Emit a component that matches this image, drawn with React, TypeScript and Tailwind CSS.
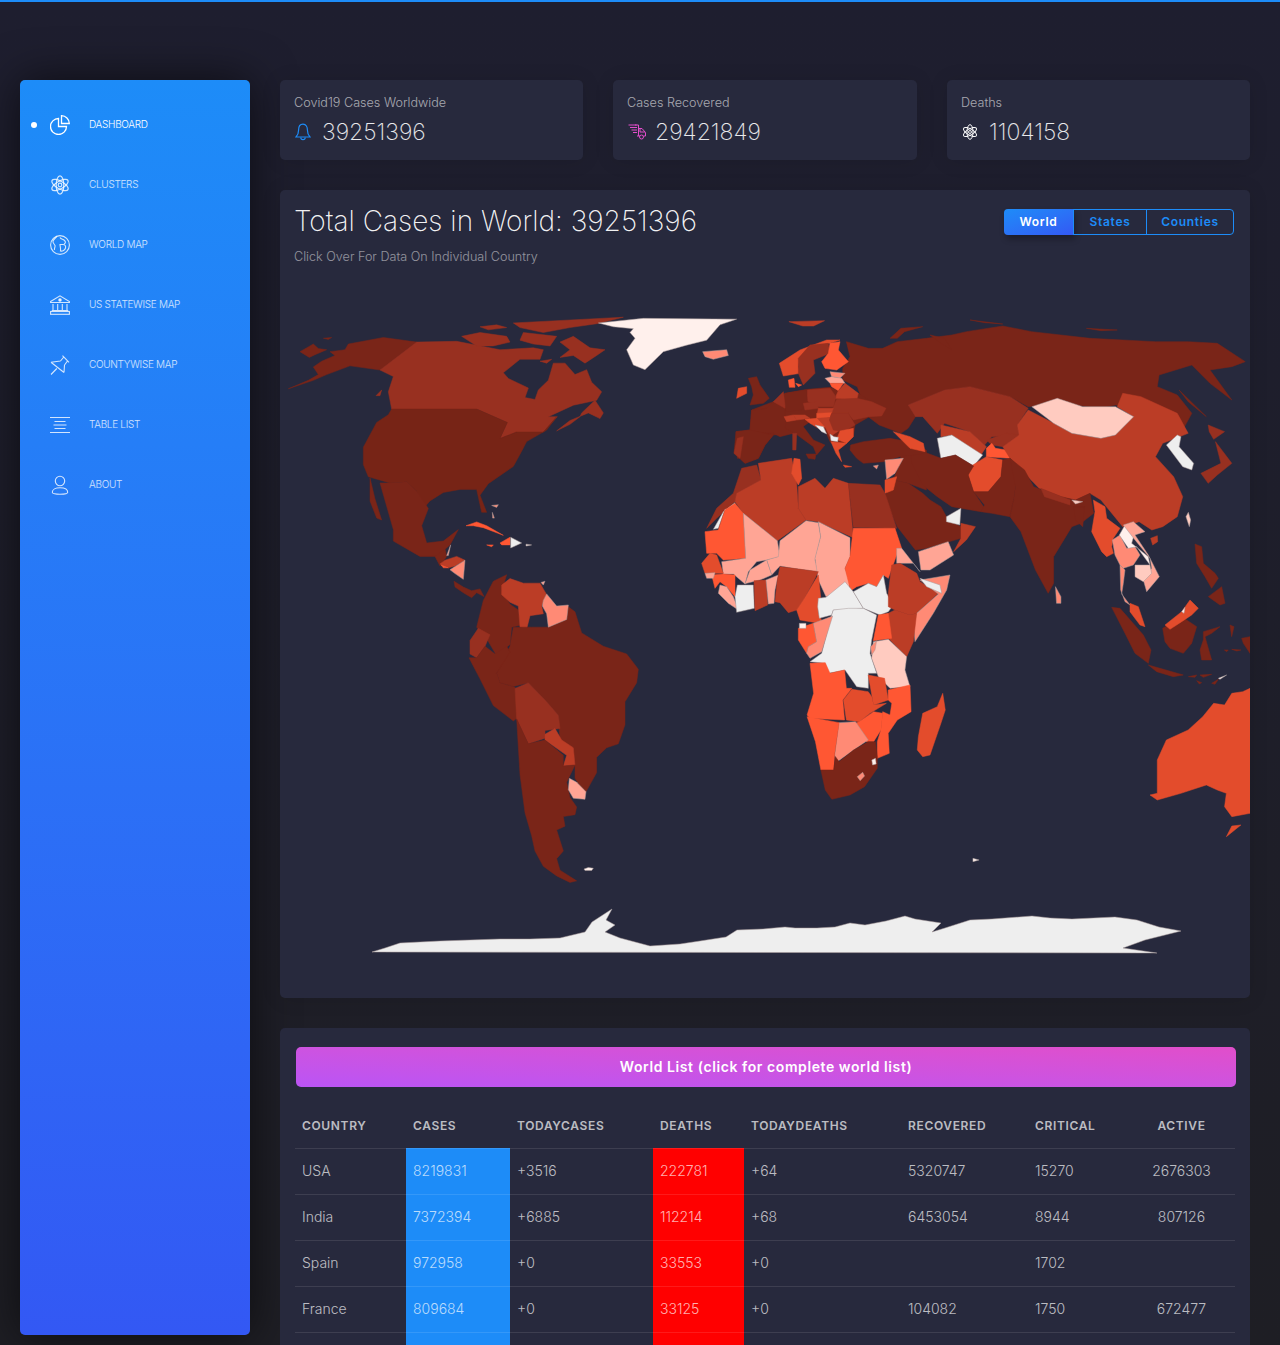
import React from "react";

const D = "#7a2518", U = "#772416", B = "#983020", C = "#bb3d26", E = "#e34c2c", O = "#ff5733", S = "#ff8a75", P = "#ffa595", L = "#ffcbc0", W = "#fff0ec", G = "#eeeeee";

type Shape = [string, string];
type Group = { t: string; shapes: Shape[] };

const groups: Group[] = [
  {
    t: "translate(280 300) scale(.33333 .38265)",
    shapes: [
      [D, "25,232 100,210 140,195 210,172 300,183 410,110 310,98 205,115 195,130 150,135 165,145 125,160 100,175 115,195 85,210"],
      [D, "60,135 100,115 115,127 140,130 105,143 88,150"],
      [D, "130,100 155,98 145,103"],
      [B, "300,183 410,110 530,108 660,130 760,125 790,130 780,155 720,155 670,190 685,205 745,230 735,255 765,260 775,235 805,210 820,165 855,165 885,195 920,182 935,215 965,240 950,262 880,275 805,305 832,305 790,345 710,345 660,362 682,320 590,285 335,285 325,240 340,200"],
      [B, "700,60 1030,45 950,62 870,72 790,85 720,72"],
      [B, "840,110 880,95 930,125 975,130 950,145 915,165 880,145 840,150 870,130"],
      [B, "545,95 600,85 680,95 690,110 640,120 590,120"],
      [B, "600,70 650,65 680,72 625,78"],
      [B, "730,85 830,95 810,120 760,115 720,105"],
      [B, "780,160 815,155 800,165"],
      [B, "905,295 945,262 970,295 960,310 925,295 870,315 830,342 870,325 900,305"],
      [B, "288,250 305,235 300,250"],
      [U, "335,285 590,285 682,320 660,362 710,345 790,345 830,305 800,340 740,370 725,395 700,435 625,480 600,510 620,555 605,555 590,495 540,495 490,503 450,525 430,545 410,500 380,475 330,478 265,462 250,430 250,385 290,320 325,300"],
      [D, "300,478 330,478 380,475 410,500 445,545 425,590 440,635 490,630 535,600 510,640 470,670 420,670 340,630 340,600"],
      [D, "270,465 285,520 305,575 290,570 270,525"],
      [D, "465,670 495,650 500,670 480,695"],
      [C, "495,680 530,670 555,680 525,695 505,700 480,690"],
      [P, "500,668 512,640 505,668"],
      [S, "510,705 555,680 550,730 525,715"],
      [O, "483,692 505,700 490,700"],
      [D, "522,735 550,750 575,760 600,755 612,775 590,765 575,778 550,765 525,750"],
      [O, "558,590 590,580 620,590 670,615 640,605 610,595 580,590"],
      [O, "620,640 640,640 635,645"],
      [O, "660,635 690,620 690,640 665,640"],
      [G, "692,620 725,635 692,648"],
      [W, "738,638 755,640 738,643"],
      [S, "635,537 655,535 650,542"],
      [S, "637,555 643,570 638,570"],
      [D, "610,785 640,735 680,718 665,760 690,795 715,810 720,850 695,855 690,900 650,930 620,885 590,855"],
      [C, "665,745 690,728 730,740 780,740 800,770 785,800 790,820 750,825 740,860 720,855 715,800 690,790 665,770"],
      [P, "783,738 795,735 790,745"],
      [D, "650,975 690,905 700,855 755,855 805,855 860,835 862,800 885,815 905,870 970,905 1040,925 1075,965 1070,1000 1035,1050 1035,1110 1015,1160 980,1170 950,1195 950,1235 915,1290 885,1250 885,1215 880,1170 840,1150 835,1085 800,1050 745,1000 700,1010 660,1000"],
      [S, "790,785 800,768 830,800 865,797 860,835 805,855 800,820 787,800"],
      [B, "570,890 595,858 630,875 615,905 590,935 570,925"],
      [D, "567,935 590,935 615,905 645,925 680,905 690,920 650,975 660,1000 705,1012 715,1090 700,1100 640,1060 600,990"],
      [B, "705,1015 745,1000 800,1050 835,1085 840,1120 795,1125 795,1145 745,1160 710,1095"],
      [C, "795,1135 825,1120 845,1150 880,1170 885,1215 850,1218 860,1190 795,1150"],
      [D, "710,1095 745,1160 795,1150 850,1190 850,1218 885,1215 860,1260 870,1300 890,1325 885,1345 850,1350 855,1375 830,1385 850,1440 830,1460 840,1490 890,1518 870,1522 830,1505 790,1480 765,1440 755,1400 735,1340 720,1240"],
      [P, "868,1250 890,1260 918,1285 915,1305 880,1302 865,1280"],
      [W, "912,1487 925,1483 940,1485 935,1491 915,1491"],
      [W, "955,60 1090,48 1370,50 1320,65 1300,85 1280,105 1220,118 1150,135 1095,182 1060,170 1040,130 1065,100 1050,85 1060,75 1000,70"],
      [S, "1268,135 1340,130 1345,145 1300,155 1275,148"],
    ],
  },
  {
    t: "translate(690 300) scale(.36364 .33333)",
    shapes: [
      [D, "440,170 430,125 490,145 530,145 570,125 650,115 720,105 760,95 860,78 940,95 1100,115 1280,125 1370,125 1450,130 1527,185 1490,200 1430,210 1490,300 1430,250 1380,195 1290,225 1285,260 1340,285 1380,340 1350,400 1340,340 1280,330 1170,315 1130,325 1020,310 930,320 880,290 770,260 700,270 600,315 620,350 600,385 580,400 520,375 490,350 535,325 470,290 460,260 420,240 420,205"],
      [D, "1345,270 1420,350 1370,305"],
      [D, "550,115 580,85 640,80 590,95 570,115"],
      [D, "660,105 700,115 720,150 690,130"],
      [C, "272,65 370,62 340,78 310,78"],
      [D, "770,60 860,72 810,68"],
      [D, "1090,85 1175,90 1130,92"],
      [B, "600,315 700,270 770,260 880,290 930,325 900,375 905,405 830,410 810,435 770,395 700,370 680,400 640,350 620,350"],
      [C, "690,375 770,395 815,440 800,465 720,405 690,410"],
      [G, "680,415 720,405 805,465 780,498 730,465 690,475"],
      [B, "815,420 870,400 905,405 860,440 830,435"],
      [O, "815,445 830,430 840,445 870,450 880,475 815,470"],
      [E, "770,500 815,470 860,480 855,530 820,575 780,575 765,525"],
      [C, "905,405 900,375 930,330 1000,370 1050,400 1130,415 1170,405 1220,350 1175,320 1190,280 1240,290 1340,340 1370,400 1300,430 1280,470 1330,530 1355,590 1340,650 1300,680 1270,690 1235,665 1190,680 1130,600 1100,580 1060,600 1020,590 960,565 920,520 880,475 860,440"],
      [L, "940,320 1010,295 1080,320 1170,320 1220,350 1170,405 1130,415 1050,400 1000,370"],
      [G, "1340,405 1350,410 1345,440 1385,490 1380,510 1355,500 1310,435"],
      [B, "1425,375 1470,395 1440,418 1428,395"],
      [B, "1445,425 1490,490 1450,525 1425,550 1405,520 1460,490"],
      [D, "575,430 650,450 650,570 600,550 560,540 580,470"],
      [D, "605,440 690,475 730,465 780,498 765,525 780,575 810,625 800,635 720,620 680,590 640,555 610,490"],
      [D, "780,575 820,575 855,530 860,480 880,475 915,520 895,560 890,600 880,650 830,640 800,635 810,615"],
      [D, "880,475 920,510 945,560 1020,590 1060,600 1100,580 1110,640 1075,670 1050,680 1000,770 1000,850 985,880 950,810 910,695 880,650 890,600 895,560"],
      [B, "965,565 1045,600 1045,615 975,590"],
      [L, "1050,600 1080,605 1060,612"],
      [D, "1055,620 1085,620 1080,680 1060,660"],
      [S, "1005,860 1020,890 1020,910 1008,910"],
      [D, "535,590 560,540 600,550 640,580 660,600 690,620 710,660 745,680 745,715 650,745 620,750 570,680"],
      [P, "628,755 710,725 725,765 660,810 635,810"],
      [C, "745,670 785,680 760,720 725,755 745,715"],
      [G, "705,650 745,625 742,675 705,665"],
    ],
  },
  {
    t: "translate(730 330) scale(.33333)",
    shapes: [
      [D, "65,240 130,215 165,190 232,178 300,172 325,182 385,190 425,215 468,235 455,258 415,262 375,285 370,320 350,340 325,360 300,335 285,300 240,275 190,310 130,315 105,345 85,385 45,400 12,370 18,305 60,300"],
      [E, "148,100 210,60 290,30 330,30 300,40 260,45 210,80 205,110 210,130 160,138"],
      [B, "205,85 240,45 295,40 300,70 250,90 255,130 220,165 205,130"],
      [O, "300,40 330,35 325,60 355,95 320,120 285,115 275,95 295,70"],
      [O, "175,150 192,145 195,172 178,172"],
      [O, "197,160 215,165 205,170"],
      [S, "300,125 345,130 330,145 305,140"],
      [P, "285,145 305,140 335,145 345,160 300,160"],
      [O, "300,160 340,160 325,182 305,170"],
      [C, "325,182 345,160 385,190 380,210 315,205"],
      [B, "232,180 300,175 318,200 310,230 265,230 230,212"],
      [B, "310,230 320,208 380,205 425,215 468,235 455,258 415,260 370,270 355,250 305,250"],
      [D, "165,190 230,180 232,215 215,240 170,245 160,225"],
      [D, "55,145 80,140 90,165 118,205 100,220 60,225 70,195 65,170"],
      [E, "25,175 50,170 50,190 20,205"],
      [D, "65,240 110,235 130,215 165,235 165,260 170,285 190,310 150,320 130,310 105,310 60,300"],
      [D, "18,305 60,300 130,315 105,345 85,385 45,400 30,385 22,385"],
      [B, "22,325 40,320 30,385 12,370"],
      [B, "130,215 160,185 165,225 165,235"],
      [D, "170,270 225,265 220,290 250,330 285,345 260,375 250,350 195,310 165,295"],
      [B, "188,310 200,310 198,360 188,360"],
      [D, "228,372 258,372 255,388 235,385"],
      [B, "220,220 260,215 265,235 225,240"],
      [C, "265,235 310,235 305,250 262,250"],
      [C, "162,260 190,255 200,270 170,275"],
      [C, "190,255 225,255 240,265 200,270"],
      [E, "260,250 305,248 300,262 260,272"],
      [E, "225,268 262,265 290,290 265,295 240,280"],
      [G, "255,285 280,290 290,312 275,305"],
      [C, "262,265 305,262 310,295 330,300 300,320 285,290"],
      [B, "305,250 355,250 375,285 340,305 310,300 298,270"],
      [E, "330,303 370,295 370,320 350,340 320,328"],
      [G, "300,312 312,320 325,322 323,335 303,332"],
      [E, "303,335 350,340 325,360 335,395 318,370"],
      [D, "362,345 400,335 480,325 560,340 590,370 510,380 460,395 400,400 380,385 360,360"],
      [E, "490,305 540,320 580,340 585,365 540,355"],
      [S, "465,390 520,385 495,430 470,448"],
      [E, "465,450 500,440 490,480 465,490"],
      [S, "430,408 445,405 440,417"],
      [E, "340,405 365,410 345,412"],
    ],
  },
  {
    t: "translate(700 450) scale(.33333)",
    shapes: [
      [B, "20,235 50,175 100,130 125,55 170,45 183,90 110,130 105,155 50,205"],
      [G, "40,238 70,185 105,158 105,175 75,178 55,235"],
      [C, "105,155 110,130 183,90 175,40 275,25 290,100 295,175 318,210 232,272 130,190"],
      [E, "282,25 300,28 305,85 295,105 275,70"],
      [C, "295,110 345,85 375,115 400,85 445,100 460,263 355,215 318,210 295,175"],
      [B, "445,100 540,105 555,130 590,235 460,232"],
      [O, "15,245 55,240 75,180 105,160 130,190 137,325 70,330 50,310 20,310"],
      [P, "130,190 232,272 240,320 200,330 170,335 145,365 135,402 100,372 70,372 65,335 137,325"],
      [P, "240,272 318,212 355,218 362,260 345,330 355,365 280,355 240,348 215,375 200,330 235,320"],
      [P, "355,215 450,263 450,320 435,355 450,400 445,420 378,440 355,390 345,325 362,260"],
      [O, "460,235 585,235 605,295 590,315 565,385 550,375 530,410 505,400 470,410 452,422 435,355 450,320"],
      [E, "5,340 30,310 50,315 70,370 15,370"],
      [O, "35,375 70,372 105,375 105,440 80,410 60,395 45,415"],
      [P, "15,370 45,368 40,385 20,385"],
      [P, "60,405 80,410 100,440 115,480 85,460 55,430"],
      [G, "112,405 160,405 163,475 110,487 105,440"],
      [P, "135,402 150,360 200,330 215,375 180,390 140,400"],
      [C, "162,392 198,390 203,465 165,482"],
      [P, "198,390 235,375 225,420 222,460 205,462"],
      [C, "240,350 280,355 355,365 340,395 310,450 290,480 265,488 240,458 225,455 232,390"],
      [E, "355,375 362,440 355,490 370,522 300,510 290,480 310,450 340,400"],
      [G, "355,445 378,442 435,395 460,425 490,475 440,480 400,480 395,495 358,505 353,470"],
      [G, "460,425 505,400 530,410 550,375 560,430 580,465 565,485 540,495 490,475"],
      [G, "400,480 445,475 490,475 530,495 515,570 510,610 530,670 505,670 505,715 470,710 435,660 385,670 375,640 330,635 365,610 395,495"],
      [O, "295,535 340,520 350,575 325,590 320,610 295,570"],
      [S, "340,520 398,498 365,605 330,625 320,610 325,590 350,575"],
      [W, "298,520 318,520 318,535 298,535"],
      [P, "590,295 605,295 660,365 640,340 590,340"],
      [C, "565,430 575,345 600,340 650,370 660,395 715,430 650,490 630,495 585,480 565,470"],
      [S, "660,390 750,375 740,420 700,490 645,575 640,520 650,490 715,432"],
      [G, "660,385 720,405 725,430 680,410"],
      [C, "565,490 585,480 630,495 650,490 640,575 620,620 565,565"],
      [O, "535,495 565,490 575,565 520,572"],
      [L, "520,575 565,568 620,620 615,660 630,710 570,715 535,680 515,625"],
      [S, "512,590 530,572 525,600 515,615"],
    ],
  },
  {
    t: "translate(690 560) scale(.36364 .33333)",
    shapes: [
      [O, "330,310 372,308 385,340 425,330 430,385 445,385 420,420 425,480 330,475 322,465 340,400"],
      [E, "445,388 490,395 500,410 505,435 540,430 495,460 465,485 430,480 422,420"],
      [E, "490,345 535,355 545,420 505,435"],
      [O, "545,390 605,375 608,455 570,480 545,520 548,580 515,595 515,545 525,510 530,455 550,465 555,430 545,420"],
      [O, "465,485 505,455 530,460 525,510 505,545 485,545 455,490"],
      [S, "410,488 455,485 490,540 450,570 405,605 398,585"],
      [O, "322,470 410,488 398,580 395,630 380,640 360,630 345,545"],
      [D, "360,630 395,630 400,590 410,605 450,570 490,545 510,545 515,590 515,625 480,680 440,705 390,718 372,690"],
      [S, "460,650 475,637 480,648 468,662"],
      [W, "500,600 510,595 512,612 502,615"],
      [E, "695,400 702,450 690,490 660,585 640,590 625,570 628,530 640,460 680,440"],
      [W, "778,895 795,900 778,905"],
      [E, "1540,385 1520,395 1490,400 1470,435 1440,430 1410,470 1370,510 1310,540 1285,600 1285,700 1265,705 1285,720 1350,700 1420,675 1450,690 1475,700 1470,740 1490,770 1540,760"],
      [E, "1490,798 1515,795 1475,830"],
    ],
  },
  {
    t: "translate(1080 490) scale(.33333)",
    shapes: [
      [E, "40,30 75,50 80,85 120,115 100,145 95,170 100,190 80,200 65,185 35,125 45,65"],
      [S, "97,150 120,135 140,175 165,170 180,195 160,225 130,235 120,225 105,195"],
      [S, "120,225 135,240 130,280 125,312 150,345 135,335 122,300"],
      [W, "118,135 135,105 165,125 155,160 205,200 210,225 170,170 145,175"],
      [P, "130,105 160,95 195,125 165,135 205,195 238,260 200,305 190,270 215,235 210,205 165,150"],
      [L, "165,225 210,225 215,250 190,275 165,260"],
      [E, "150,340 175,350 195,410 180,405 150,365"],
      [L, "318,80 325,67 332,90 328,110"],
      [C, "212,145 232,137 233,155 218,165"],
      [D, "95,352 120,355 190,435 213,480 205,520 165,490 135,430"],
      [D, "205,525 240,535 310,555 280,560 230,545"],
      [D, "248,415 305,380 350,410 335,460 310,490 270,475 255,455"],
      [E, "255,405 305,365 330,330 355,355 335,375 305,395 270,418"],
      [W, "305,365 315,352 312,370"],
      [D, "370,425 420,410 395,430 375,440 395,510 365,510 360,480 370,450"],
      [D, "345,162 365,170 370,220 405,250 415,265 395,295 375,260 350,220"],
      [D, "385,320 425,290 435,340 420,345"],
      [D, "450,405 462,410 455,440"],
      [W, "415,565 440,555 420,568"],
      [D, "395,580 415,568 405,583"],
      [D, "325,560 350,555 345,562"],
      [D, "360,555 395,553 370,562"],
      [D, "350,572 365,578 358,582"],
      [D, "485,445 510,440 510,490 490,460"],
      [D, "433,480 445,480 440,485"],
      [D, "455,478 483,480 470,483"],
    ],
  },
  {
    t: "",
    shapes: [[G, "372,952 385,948 400,943 420,942 440,941 470,940 500,939 530,939 560,938 585,932 592,922 612,909 606,920 615,925 605,932 620,938 650,946 680,944 700,941 726,937 737,930 763,929 785,927 795,928 817,928 835,927 850,923 865,925 886,921 905,916 915,919 941,923 932,932 945,928 970,920 992,919 1032,916 1050,918 1072,919 1115,917 1137,920 1159,927 1181,931 1145,940 1123,948 1157,953"]],
  },
];

const isLight = (c: string) => c === S || c === P || c === L || c === W || c === G;

function WorldMap() {
  return (
    <svg viewBox="280 290 970 690" className="block w-[970px] h-[690px]">
      {groups.map((g, i) => (
        <g key={i} transform={g.t || undefined}>
          {g.shapes.map(([fill, pts], j) => (
            <polygon
              key={j}
              points={pts}
              fill={fill}
              stroke={isLight(fill) ? "#a89a9a" : fill}
              strokeWidth={0.5}
              vectorEffect="non-scaling-stroke"
              strokeLinejoin="round"
            />
          ))}
        </g>
      ))}
    </svg>
  );
}

const Atom = ({ className = "", size = 20 }: { className?: string; size?: number }) => (
  <svg viewBox="0 0 20 20" width={size} height={size} fill="none" stroke="currentColor" strokeWidth="1.2" className={className}>
    <ellipse cx="10" cy="10" rx="9.2" ry="3.8" transform="rotate(30 10 10)" />
    <ellipse cx="10" cy="10" rx="9.2" ry="3.8" transform="rotate(150 10 10)" />
    <ellipse cx="10" cy="10" rx="3.8" ry="9.2" />
    <circle cx="10" cy="10" r="1.8" />
  </svg>
);

const Pie = () => (
  <svg viewBox="0 0 20 20" width="20" height="20" fill="none" stroke="currentColor" strokeWidth="1.3">
    <path d="M8.5 3.5A8 8 0 1 0 16.5 11.5H8.5Z" />
    <path d="M11.5.7A8 8 0 0 1 19.3 8.5H11.5Z" />
  </svg>
);
const Globe = () => (
  <svg viewBox="0 0 20 20" width="20" height="20" fill="none" stroke="currentColor" strokeWidth="1.1">
    <circle cx="10" cy="10" r="9.4" />
    <path d="M7 1.2C6 3 3.5 4 3 6c-.5 2 1.5 3 2 4.5S4 13 4.500 15M10 2.500c1 2 3 1.500 4.500 3s1 3-.5 3.500" />
    <path d="M10 9.500h3c2 0 3 1.500 2.500 3.500s-3 3.500-5 3c.5-2-.5-4.500-.5-6.500Z" />
  </svg>
);
const Bank = () => (
  <svg viewBox="0 0 20 20" width="20" height="20" fill="none" stroke="currentColor" strokeWidth="1.1">
    <path d="M.6 6.500 10 .8l9.400 5.700v1H.6Z" />
    <circle cx="10" cy="5" r="1.200" fill="currentColor" />
    <path d="M3 9v6M7.700 9v6M12.300 9v6M17 9v6M1.800 15.500h16.400" />
    <rect x=".6" y="16.500" width="18.800" height="2.800" />
  </svg>
);
const Pin = () => (
  <svg viewBox="0 0 20 20" width="20" height="20" fill="none" stroke="currentColor" strokeWidth="1.1">
    <path d="M1 7.300 10.500 6M1 7.300 14 17.500M14 17.500 14.500 10M12.500.7 19 7.300M10.500 6l3.300-4M14.500 10l3-4M1 19.500l5.800-6" />
  </svg>
);
const AlignCenter = () => (
  <svg viewBox="0 0 20 20" width="20" height="20" fill="none" stroke="currentColor" strokeWidth="1">
    <path d="M0 2.500h20M4.500 6.500h11M3.500 10h13M4.500 13.500h11M0 17.500h20" />
  </svg>
);
const Person = () => (
  <svg viewBox="0 0 20 20" width="20" height="20" fill="none" stroke="currentColor" strokeWidth="1.1">
    <circle cx="10" cy="6" r="4.700" />
    <path d="M2.300 17.300c0-3 3.500-4.600 7.700-4.600s7.700 1.600 7.700 4.600c0 1.300-3.500 2-7.700 2s-7.700-.7-7.700-2Z" />
  </svg>
);
const Bell = () => (
  <svg viewBox="0 0 16 18" width="16" height="18" fill="none" stroke="currentColor" strokeWidth="1.2">
    <path d="M8 1.200C4.800 1.200 3.600 4 3.600 7c0 3.500-1.200 5.600-2.600 7h14c-1.400-1.400-2.600-3.500-2.600-7 0-3-1.200-5.800-4.400-5.800Z" />
    <path d="M5.800 14.500a2.200 2.200 0 0 0 4.400 0" />
  </svg>
);
const Truck = () => (
  <svg viewBox="0 0 18 16" width="18" height="16" fill="none" stroke="currentColor" strokeWidth="1">
    <path d="M.5 1h8M2 3.500h7M3.500 6h5.500M5 8.500h4M7 1h3.500v11H9M10.500 4.500H14l3.500 4v3.500H15.500M10.500 12h1.500" />
    <circle cx="13.500" cy="13" r="2" />
    <path d="M12 4.500v3.500h5" />
  </svg>
);

const nav: [string, React.ReactNode][] = [
  ["Dashboard", <Pie />],
  ["Clusters", <Atom />],
  ["World Map", <Globe />],
  ["US Statewise Map", <Bank />],
  ["Countywise Map", <Pin />],
  ["Table List", <AlignCenter />],
  ["About", <Person />],
];

function Sidebar() {
  return (
    <aside className="w-[230px] h-[1255px] shrink-0 rounded-[5px] bg-gradient-to-b from-[#1d8cf8] to-[#3358f4] pt-[15px] shadow-[0_0_45px_rgba(0,0,0,0.6)]">
      {nav.map(([label, icon], i) => (
        <div key={label} className={`relative flex items-center h-[60px] pl-[30px] ${i === 0 ? "text-white" : "text-white/80"}`}>
          {i === 0 && <span className="absolute left-[11px] top-[27px] w-[6px] h-[6px] rounded-full bg-white" />}
          <span className="w-[20px] h-[20px] flex items-center justify-center">{icon}</span>
          <span className="ml-[19px] pb-[2px] text-[10px] font-light uppercase tracking-[-0.3px] font-['Inter',sans-serif]">{label}</span>
        </div>
      ))}
    </aside>
  );
}

function Stat({ label, value, icon, className }: { label: string; value: string; icon: React.ReactNode; className: string }) {
  return (
    <div className={`h-[80px] rounded-[5px] bg-[#27293d] shadow-[0_1px_20px_rgba(0,0,0,0.1)] pt-[15px] pl-[15px] ${className}`}>
      <div className="-ml-px text-[12.6px] leading-[15px] font-light text-white/60">{label}</div>
      <div className="mt-[7px] flex items-center h-[30px]">
        <span className="w-[18px] flex items-center justify-start">{icon}</span>
        <span className="ml-[9px] text-[23px] font-extralight text-white/90">{value}</span>
      </div>
    </div>
  );
}

const rows = [
  ["USA", "8219831", "+3516", "222781", "+64", "5320747", "15270", "2676303"],
  ["India", "7372394", "+6885", "112214", "+68", "6453054", "8944", "807126"],
  ["Spain", "972958", "+0", "33553", "+0", "", "1702", ""],
  ["France", "809684", "+0", "33125", "+0", "104082", "1750", "672477"],
  ["", "", "", "", "", "", "", ""],
];
const heads = ["Country", "Cases", "TodayCases", "Deaths", "TodayDeaths", "Recovered", "Critical", "Active"];
const widths = ["w-[111px]", "w-[104px]", "w-[143px]", "w-[91px]", "w-[157px]", "w-[127px]", "w-[100px]", "w-[107px]"];

export default function App() {
  return (
    <div className="h-[1345px] overflow-hidden border-t-2 border-[#1d8cf8] bg-gradient-to-b from-[#1e1e2f] to-[#1e1e24] font-['Inter',sans-serif]">
      <div className="flex pt-[78px] pl-[20px]">
        <Sidebar />
        <main className="w-[970px] ml-[30px]">
          <div className="flex justify-between">
            <Stat className="w-[303px]" label="Covid19 Cases Worldwide" value="39251396" icon={<span className="text-[#1d8cf8]"><Bell /></span>} />
            <Stat className="w-[304px]" label="Cases Recovered" value="29421849" icon={<span className="text-[#e14eca]"><Truck /></span>} />
            <Stat className="w-[303px]" label="Deaths" value="1104158" icon={<span className="text-white"><Atom size={16} /></span>} />
          </div>

          <section className="mt-[30px] h-[808px] rounded-[5px] bg-[#27293d] shadow-[0_1px_20px_rgba(0,0,0,0.1)]">
            <div className="h-[100px] relative px-[15px] pt-[12px]">
              <h2 className="-ml-px text-[28px] leading-[38px] font-extralight text-white/95">Total Cases in World: 39251396</h2>
              <p className="-ml-px mt-[9px] text-[12.6px] leading-[15px] font-light text-white/50">Click Over For Data On Individual Country</p>
              <div className="absolute right-[16px] top-[19px] flex h-[26px] text-[12px] font-semibold tracking-[0.7px] rounded-[4px]">
                <button className="w-[69px] rounded-l-[4px] text-white bg-gradient-to-br from-[#1d8cf8] to-[#3358f4] shadow-[2px_4px_6px_rgba(0,0,0,0.3)]">World</button>
                <button className="w-[74px] border border-[#1d8cf8] text-[#1d8cf8]">States</button>
                <button className="w-[88px] -ml-px border border-[#1d8cf8] rounded-r-[4px] text-[#1d8cf8]">Counties</button>
              </div>
            </div>
            <WorldMap />
          </section>

          <section className="mt-[30px] rounded-[5px] bg-[#27293d] px-[15px] pt-[19px] pb-[20px]">
            <div className="ml-[1px] w-[940px] h-[40px] rounded-[5px] bg-gradient-to-tr from-[#ba54f5] to-[#e14eca] flex items-center justify-center text-[14px] font-semibold tracking-[0.58px] text-white pb-[2px]">
              World List (click for complete world list)
            </div>
            <table className="mt-[18px] w-[940px] table-fixed border-collapse text-[14px] font-light text-white/70">
              <thead>
                <tr className="h-[43px] border-b border-white/10">
                  {heads.map((h, i) => (
                    <th key={h} className={`${widths[i]} px-[7px] ${i === 7 ? "text-center" : "text-left"} text-[12px] font-semibold uppercase tracking-[0.65px] text-white/70`}>{h}</th>
                  ))}
                </tr>
              </thead>
              <tbody>
                {rows.map((r, ri) => (
                  <tr key={ri} className="h-[46px] border-b border-white/10">
                    {r.map((c, i) => (
                      <td key={i} className={`px-[7px] pb-[2px] ${i === 7 ? "text-center" : ""} ${i === 1 ? "bg-[#1d8cf8]" : ""} ${i === 3 ? "bg-[#ff0000]" : ""}`}>{c}</td>
                    ))}
                  </tr>
                ))}
              </tbody>
            </table>
          </section>
        </main>
      </div>
    </div>
  );
}
